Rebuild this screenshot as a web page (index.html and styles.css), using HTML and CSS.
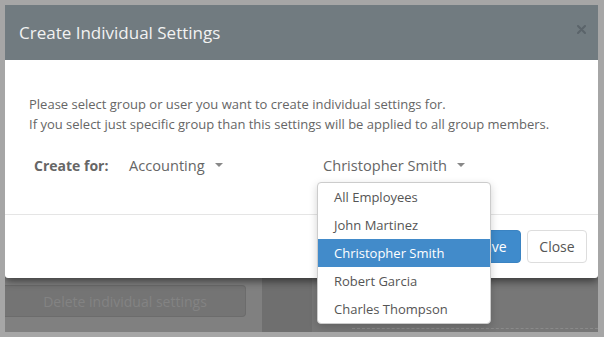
FILE: index.html
```html
<!DOCTYPE html>
<html lang="en">
<head>
    <meta charset="UTF-8">
    <title>Create Individual Settings</title>
    <link rel="stylesheet" href="styles.css">
</head>
<body>
    <div class="screen">
        <!-- Janela modal -->
        <div class="modal">
            <div class="modal-header">
                <h2>Create Individual Settings</h2>
                <svg class="close-x" width="9" height="9" viewBox="0 0 9 9">
                    <path d="M1 1 L8 8 M8 1 L1 8" stroke="#5b646a" stroke-width="2" stroke-linecap="round"/>
                </svg>
            </div>
            <div class="modal-body">
                <p>Please select group or user you want to create individual settings for.<br>
                If you select just specific group than this settings will be applied to all group members.</p>
                <div class="create-row">
                    <span class="create-label">Create for:</span>
                    <div class="picker group-picker">Accounting <span class="caret"></span></div>
                    <div class="picker user-picker">Christopher Smith <span class="caret"></span>
                        <ul class="menu">
                            <li>All Employees</li>
                            <li>John Martinez</li>
                            <li class="active">Christopher Smith</li>
                            <li>Robert Garcia</li>
                            <li>Charles Thompson</li>
                        </ul>
                    </div>
                </div>
            </div>
            <div class="modal-footer">
                <button class="btn btn-primary">Save</button>
                <button class="btn btn-default">Close</button>
            </div>
        </div>

        <!-- Pagina por tras -->
        <div class="under">
            <div class="under-left">
                <button class="btn-delete">Delete individual settings</button>
            </div>
            <div class="under-mid"></div>
            <div class="under-right">
                <div class="dashed"></div>
            </div>
        </div>
    </div>
</body>
</html>
```

FILE: styles.css
```css
body {
    margin: 0;
    padding: 5px 6px 5px 5px;
    background-color: #a6a6a6;
    font-family: "Open Sans", "DejaVu Sans", sans-serif;
}
.screen {
    height: 327px;
    background-color: #777;
    display: flex;
    flex-direction: column;
    overflow: hidden;
}
.modal {
    position: relative;
    z-index: 2;
    background-color: #fff;
    border-radius: 0 0 3px 3px;
    box-shadow: 0 3px 8px rgba(0, 0, 0, 0.55);
}
.modal-header {
    height: 55px;
    background-color: #717b80;
    display: flex;
    align-items: center;
    justify-content: space-between;
    padding: 0 12px 0 14px;
}
.modal-header h2 {
    margin: 0;
    font-size: 17px;
    font-weight: 400;
    color: #f2f2f2;
    padding-bottom: 1px;
}
.close-x {
    margin-top: -6px;
}
.modal-body {
    padding: 34px 24px 32px 24px;
    border-bottom: 1px solid #e5e5e5;
}
.modal-body p {
    margin: 0;
    font-size: 13px;
    line-height: 20px;
    color: #666;
}
.create-row {
    display: flex;
    align-items: center;
    height: 34px;
    margin-top: 14px;
    padding-left: 5px;
    font-size: 14px;
    color: #666;
}
.create-label {
    width: 95px;
    font-weight: bold;
}
.picker {
    position: relative;
    height: 34px;
    display: flex;
    align-items: center;
    font-size: 14.6px;
}
.group-picker {
    width: 194px;
}
.caret {
    display: inline-block;
    width: 0;
    height: 0;
    margin-left: 10px;
    border-top: 4px solid #888;
    border-left: 4px solid transparent;
    border-right: 4px solid transparent;
}
.menu {
    position: absolute;
    top: 100%;
    left: -6px;
    width: 172px;
    margin: 0;
    padding: 0;
    list-style: none;
    background-color: #fff;
    border: 1px solid #ccc;
    border-radius: 4px;
    box-shadow: 0 3px 8px rgba(0, 0, 0, 0.18);
    z-index: 3;
}
.menu li {
    height: 28px;
    line-height: 28px;
    padding-left: 16px;
    font-size: 13px;
    color: #555;
}
.menu li.active {
    background-color: #428bca;
    color: #fff;
}
.modal-footer {
    display: flex;
    justify-content: flex-end;
    gap: 6px;
    padding: 15px 11px 15px 0;
}
.btn {
    height: 33px;
    padding: 0 11px;
    font-family: inherit;
    font-size: 14px;
    border-radius: 4px;
}
.btn-primary {
    width: 59px;
    background-color: #3f8bcc;
    border: 1px solid #3a83c2;
    color: #fff;
}
.btn-default {
    width: 60px;
    background-color: #fff;
    border: 1px solid #ddd;
    color: #555;
}
.under {
    flex: 1;
    display: flex;
}
.under-left {
    width: 257px;
    background-color: #808080;
    padding-top: 7px;
}
.btn-delete {
    display: block;
    width: 241px;
    height: 32px;
    background-color: #747474;
    border: 1px solid #6c6c6c;
    border-left: none;
    border-radius: 0 4px 4px 0;
    color: #838383;
    font-family: inherit;
    font-size: 14px;
}
.under-mid {
    width: 50px;
    background-color: #6f6f6f;
}
.under-right {
    flex: 1;
    background-color: #777;
    padding: 50px 0 0 40px;
}
.dashed {
    border-top: 1px dashed #8a8a8a;
}
```
